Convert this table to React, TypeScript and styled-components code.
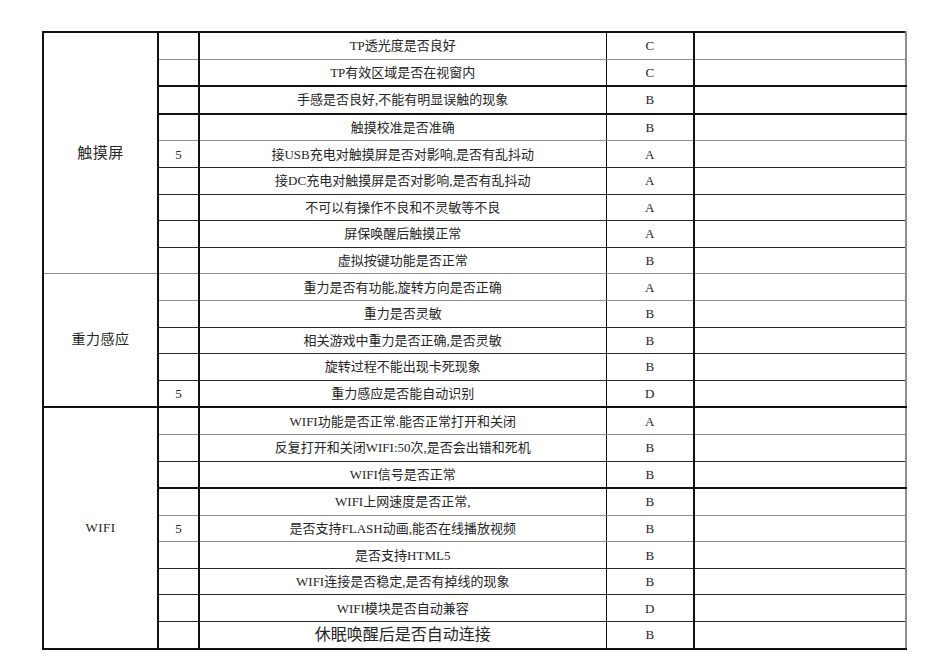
import styled, { createGlobalStyle } from "styled-components";

type Line = "thick" | "dark" | "grey";

interface CheckRow {
  item: string;
  grade: string;
  count?: string;
  line: Line;
  big?: boolean;
}

interface Section {
  name: string;
  nameSize: number;
  line: Line;
  rows: CheckRow[];
}

const sections: Section[] = [
  {
    name: "触摸屏",
    nameSize: 15,
    line: "grey",
    rows: [
      { item: "TP透光度是否良好", grade: "C", line: "grey" },
      { item: "TP有效区域是否在视窗内", grade: "C", line: "thick" },
      { item: "手感是否良好,不能有明显误触的现象", grade: "B", line: "thick" },
      { item: "触摸校准是否准确", grade: "B", line: "grey" },
      { item: "接USB充电对触摸屏是否对影响,是否有乱抖动", grade: "A", count: "5", line: "dark" },
      { item: "接DC充电对触摸屏是否对影响,是否有乱抖动", grade: "A", line: "dark" },
      { item: "不可以有操作不良和不灵敏等不良", grade: "A", line: "dark" },
      { item: "屏保唤醒后触摸正常", grade: "A", line: "dark" },
      { item: "虚拟按键功能是否正常", grade: "B", line: "grey" },
    ],
  },
  {
    name: "重力感应",
    nameSize: 14,
    line: "thick",
    rows: [
      { item: "重力是否有功能,旋转方向是否正确", grade: "A", line: "grey" },
      { item: "重力是否灵敏", grade: "B", line: "dark" },
      { item: "相关游戏中重力是否正确,是否灵敏", grade: "B", line: "dark" },
      { item: "旋转过程不能出现卡死现象", grade: "B", line: "dark" },
      { item: "重力感应是否能自动识别", grade: "D", count: "5", line: "thick" },
    ],
  },
  {
    name: "WIFI",
    nameSize: 13,
    line: "thick",
    rows: [
      { item: "WIFI功能是否正常.能否正常打开和关闭", grade: "A", line: "grey" },
      { item: "反复打开和关闭WIFI:50次,是否会出错和死机", grade: "B", line: "dark" },
      { item: "WIFI信号是否正常", grade: "B", line: "thick" },
      { item: "WIFI上网速度是否正常,", grade: "B", line: "grey" },
      { item: "是否支持FLASH动画,能否在线播放视频", grade: "B", count: "5", line: "grey" },
      { item: "是否支持HTML5", grade: "B", line: "dark" },
      { item: "WIFI连接是否稳定,是否有掉线的现象", grade: "B", line: "dark" },
      { item: "WIFI模块是否自动兼容", grade: "D", line: "dark" },
      { item: "休眠唤醒后是否自动连接", grade: "B", line: "thick", big: true },
    ],
  },
];

const columnWidths = [115, 41, 407, 88, 212];

const lineStyle: Record<Line, string> = {
  thick: "2px solid #111",
  dark: "1px solid #2a2a2a",
  grey: "1px solid #8c8c8c",
};

const GlobalStyle = createGlobalStyle`
  html, body {
    margin: 0;
    padding: 0;
    background: #ffffff;
  }
  body {
    font-family: "Liberation Serif", "Noto Sans CJK SC", serif;
    color: #262626;
  }
`;

const Page = styled.div`
  width: 950px;
  height: 672px;
  padding: 31px 0 0 42px;
  box-sizing: border-box;
`;

const Sheet = styled.table`
  border-collapse: collapse;
  table-layout: fixed;
  width: 863px;
  border-top: 2px solid #111;
  border-left: 2px solid #111;
  border-right: 2px solid #8f8f8f;
`;

const Column = styled.col<{ $w: number }>`
  width: ${(p) => p.$w}px;
`;

const Cell = styled.td<{ $line: Line; $size?: number; $right?: string }>`
  height: 25.6px;
  padding: 0;
  text-align: center;
  vertical-align: middle;
  font-size: ${(p) => p.$size ?? 13}px;
  line-height: 1;
  white-space: nowrap;
  border-bottom: ${(p) => lineStyle[p.$line]};
  border-right: ${(p) => p.$right ?? "2px solid #111"};
`;

const NameCell = styled(Cell)`
  letter-spacing: 0.5px;
`;

export default function App() {
  return (
    <>
      <GlobalStyle />
      <Page>
        <Sheet>
          <colgroup>
            {columnWidths.map((w, i) => (
              <Column key={i} $w={w} />
            ))}
          </colgroup>
          <tbody>
            {sections.map((section) =>
              section.rows.map((row, i) => (
                <tr key={section.name + i}>
                  {i === 0 && (
                    <NameCell
                      rowSpan={section.rows.length}
                      $line={section.line}
                      $size={section.nameSize}
                    >
                      {section.name}
                    </NameCell>
                  )}
                  <Cell $line={row.line}>{row.count ?? ""}</Cell>
                  <Cell
                    $line={row.line}
                    $size={row.big ? 16 : 13}
                    $right="1px solid #111"
                  >
                    {row.item}
                  </Cell>
                  <Cell $line={row.line}>{row.grade}</Cell>
                  <Cell $line={row.line} $right="2px solid #8f8f8f" />
                </tr>
              ))
            )}
          </tbody>
        </Sheet>
      </Page>
    </>
  );
}
